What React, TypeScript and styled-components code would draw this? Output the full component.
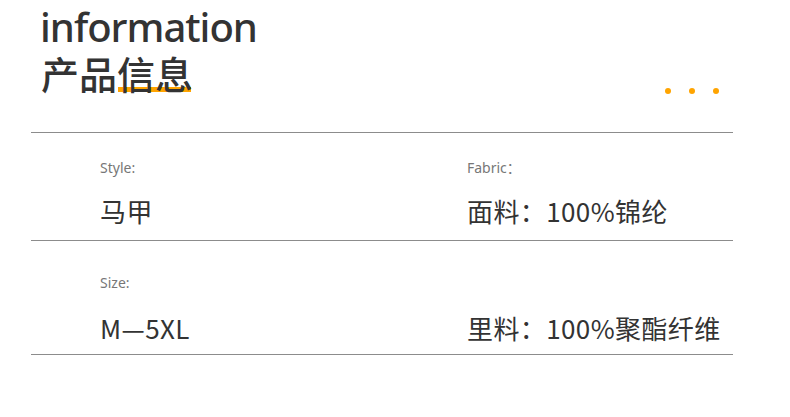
import React from 'react';
import styled, { createGlobalStyle } from 'styled-components';

const GlobalStyle = createGlobalStyle`
  html, body {
    margin: 0;
    padding: 0;
    background: #fff;
  }
  body {
    font-family: "Noto Sans", "Noto Sans CJK SC", sans-serif;
    color: #333;
  }
`;

type Item = { label: string; value: string };

const rows: { items: Item[]; top: number; gap: number; bottom: number }[] = [
  {
    items: [
      { label: 'Style:', value: '马甲' },
      { label: 'Fabric：', value: '面料：100%锦纶' },
    ],
    top: 25,
    gap: 16,
    bottom: 12,
  },
  {
    items: [
      { label: 'Size:', value: 'M—5XL' },
      { label: '', value: '里料：100%聚酯纤维' },
    ],
    top: 32,
    gap: 18,
    bottom: 9,
  },
];

export default function App() {
  return (
    <>
      <GlobalStyle />
      <Page>
        <Header>
          <TitleBlock>
            <EnTitle>information</EnTitle>
            <CnTitle>
              产品<Marked>信息</Marked>
            </CnTitle>
          </TitleBlock>
          <Dots>
            <Dot />
            <Dot />
            <Dot />
          </Dots>
        </Header>
        {rows.map((row, i) => (
          <Row key={i} $top={row.top} $bottom={row.bottom}>
            {row.items.map((item, j) => (
              <Cell key={j}>
                <Label>{item.label}</Label>
                <Value $gap={row.gap}>{item.value}</Value>
              </Cell>
            ))}
          </Row>
        ))}
      </Page>
    </>
  );
}

const Page = styled.div`
  width: 702px;
  margin-left: 31px;
`;

const Header = styled.div`
  display: flex;
  justify-content: space-between;
  align-items: flex-end;
  padding: 7px 14px 40px 9px;
  border-bottom: 1px solid #8c8c8c;
`;

const TitleBlock = styled.div`
  display: flex;
  flex-direction: column;
`;

const EnTitle = styled.div`
  font-family: "Noto Sans", sans-serif;
  font-size: 40px;
  font-weight: 500;
  letter-spacing: -1px;
  line-height: 40px;
  color: #333;
`;

const CnTitle = styled.div`
  margin-top: 7px;
  margin-left: 1px;
  font-family: "Noto Sans CJK SC", sans-serif;
  font-size: 38px;
  font-weight: 500;
  line-height: 38px;
  color: #333;
`;

const Marked = styled.span`
  position: relative;
  z-index: 0;

  &::after {
    content: '';
    position: absolute;
    left: 1px;
    right: 2px;
    bottom: 8px;
    height: 5px;
    background: #ffa400;
    z-index: -1;
  }
`;

const Dots = styled.div`
  display: flex;
  gap: 18px;
  margin-bottom: -2px;
`;

const Dot = styled.span`
  width: 6px;
  height: 6px;
  border-radius: 50%;
  background: #ffa400;
`;

const Row = styled.div<{ $top: number; $bottom: number }>`
  display: grid;
  grid-template-columns: 367px 1fr;
  padding: ${(p) => p.$top}px 0 ${(p) => p.$bottom}px 69px;
  border-bottom: 1px solid #8c8c8c;
`;

const Cell = styled.div`
  display: flex;
  flex-direction: column;
`;

const Label = styled.div`
  height: 20px;
  font-family: "Noto Sans", "Noto Sans CJK SC", sans-serif;
  font-size: 14px;
  line-height: 20px;
  color: #777;
`;

const Value = styled.div<{ $gap: number }>`
  margin-top: ${(p) => p.$gap}px;
  font-family: "Noto Sans CJK SC", sans-serif;
  font-size: 26px;
  letter-spacing: 0.4px;
  line-height: 34px;
  color: #333;
`;
